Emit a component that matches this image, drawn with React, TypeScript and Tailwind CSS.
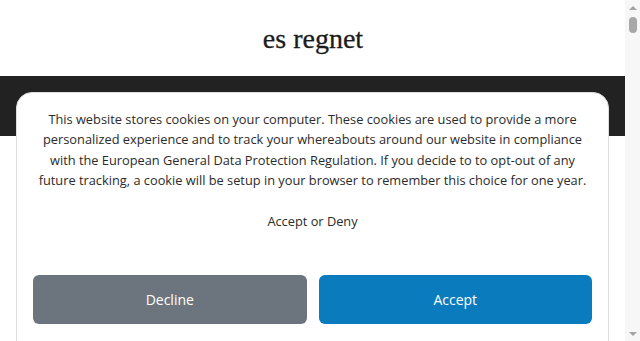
import React from "react";

export default function App() {
  return (
    <div className="flex h-[341px] w-[640px] overflow-hidden bg-white font-['Open_Sans',sans-serif]">
      {/* Page */}
      <div className="relative flex-1 flex flex-col">
        <header className="h-[76px] flex items-center justify-center">
          <span className="font-['Liberation_Serif',serif] text-[28px] leading-none text-[#1c1c1c] pt-[1px] pl-[1px] [-webkit-text-stroke:0.3px_#1c1c1c]">
            es regnet
          </span>
        </header>
        <div className="h-[60px] bg-[#222]" />
        <div className="flex-1 bg-white" />

        {/* Cookie consent card */}
        <div className="absolute left-[16px] top-[92px] w-[593px] h-[251px] bg-white border border-[#dcdcdc] rounded-t-[16px] px-4 pt-[16px] flex flex-col">
          <p className="text-[12.8px] leading-[20.3px] text-[#2b2b2b] text-center">
            This website stores cookies on your computer. These cookies are used to provide a more
            <br />
            personalized experience and to track your whereabouts around our website in compliance
            <br />
            with the European General Data Protection Regulation. If you decide to to opt-out of any
            <br />
            future tracking, a cookie will be setup in your browser to remember this choice for one year.
          </p>
          <p className="mt-[21px] text-[12.8px] leading-[20px] text-[#2b2b2b] text-center">Accept or Deny</p>
          <div className="mt-[44px] grid grid-cols-2 gap-[12px]">
            <button className="h-[49px] rounded-[6px] bg-[#6c757d] text-white text-[14px]">Decline</button>
            <button className="h-[49px] rounded-[6px] bg-[#0a7bbd] text-white text-[14px]">Accept</button>
          </div>
        </div>
      </div>

      {/* Scrollbar */}
      <div className="w-[15px] bg-[#f7f7f7] flex flex-col items-center">
        <div className="mt-[6px] w-0 h-0 border-l-[4px] border-r-[4px] border-b-[4px] border-l-transparent border-r-transparent border-b-[#a3a3a3]" />
        <div className="mt-[7px] w-[8px] h-[16px] rounded-full bg-[#a8a8a8]" />
        <div className="flex-1" />
        <div className="mb-[5px] w-0 h-0 border-l-[4px] border-r-[4px] border-t-[4px] border-l-transparent border-r-transparent border-t-[#a3a3a3]" />
      </div>
    </div>
  );
}
